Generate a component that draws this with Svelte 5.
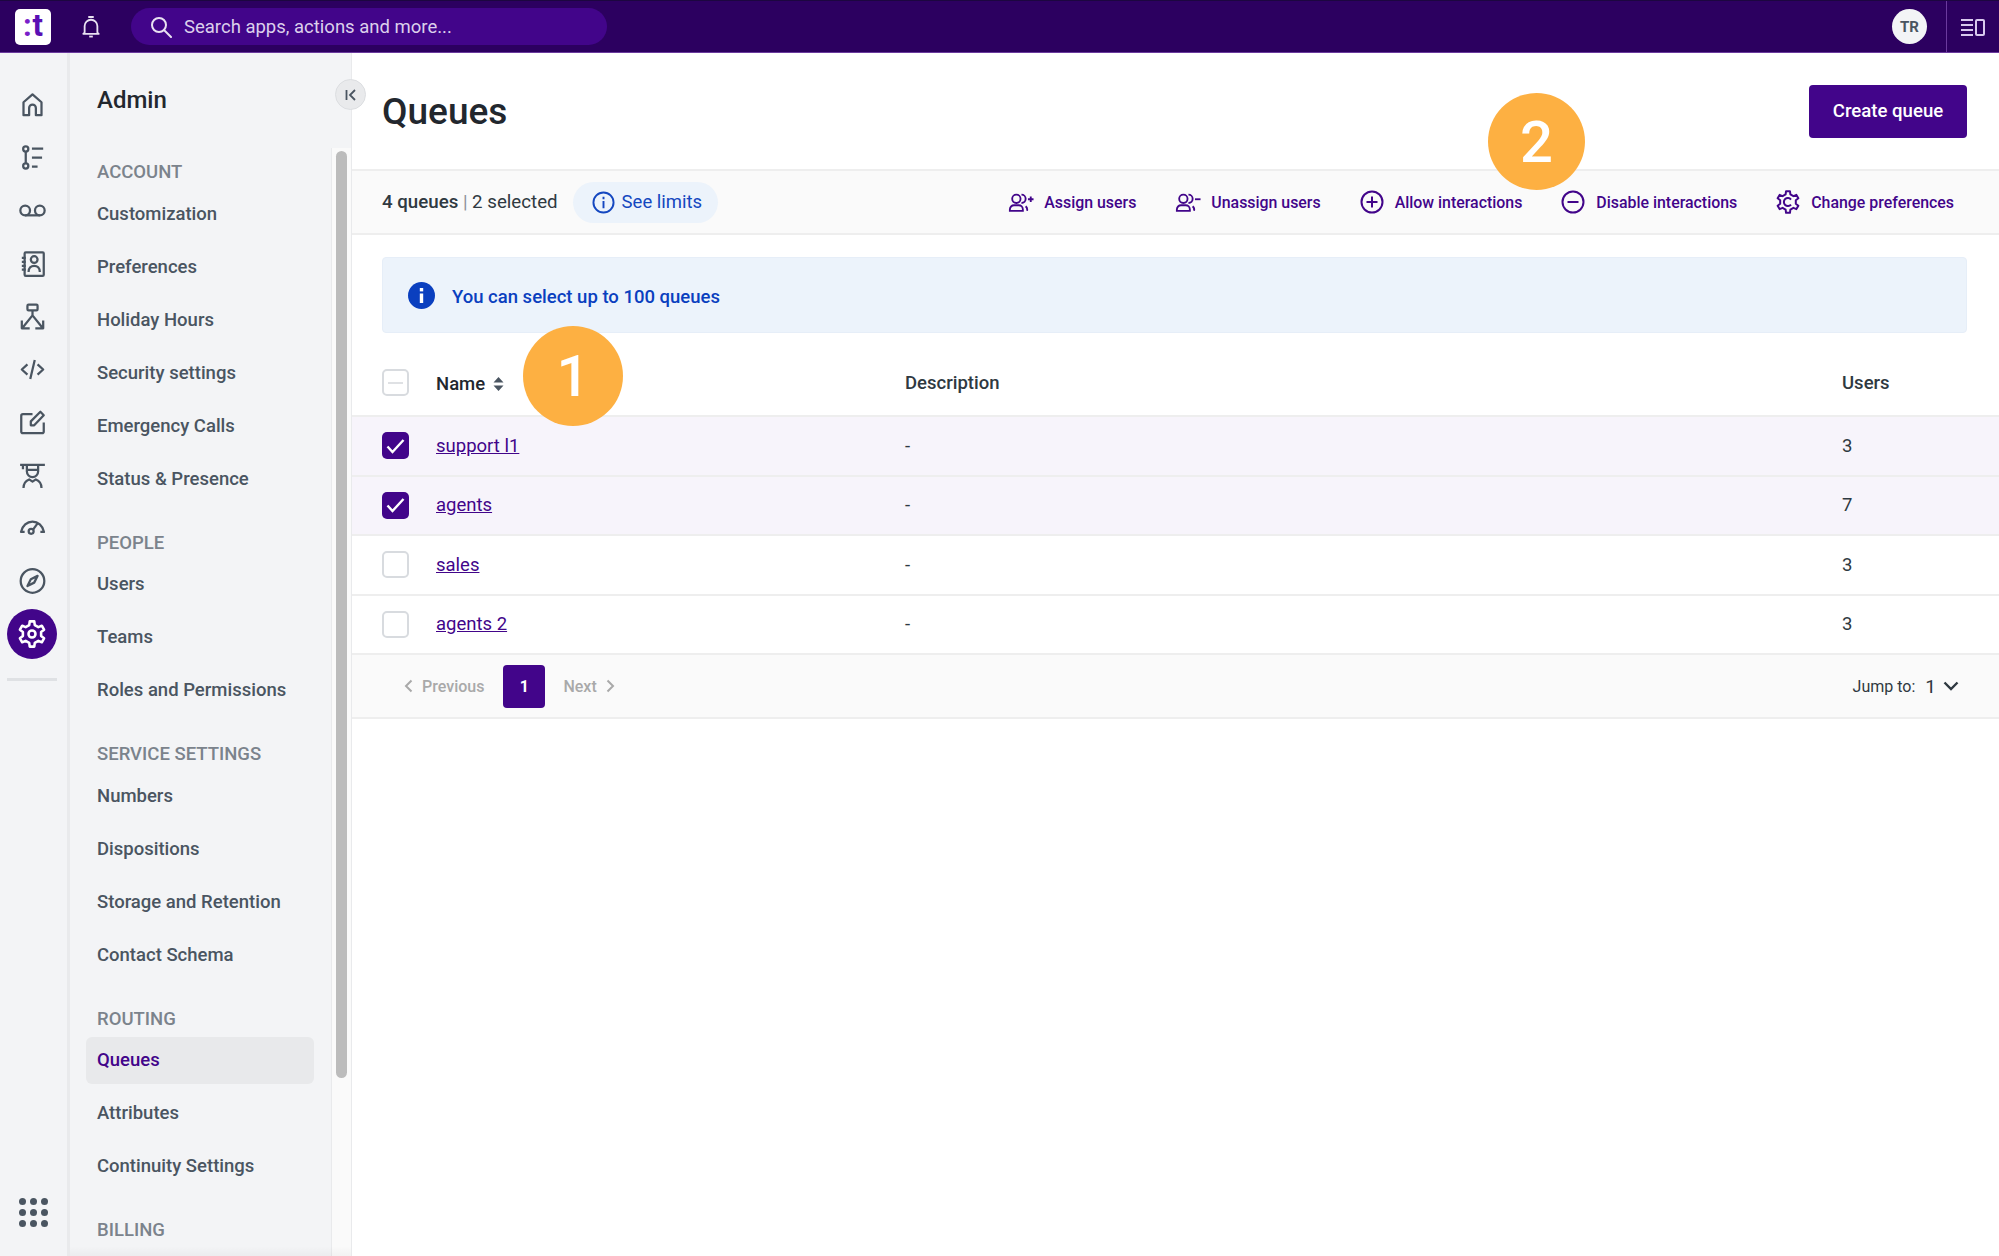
<script>
  const sections = [
    { title: 'ACCOUNT', items: ['Customization', 'Preferences', 'Holiday Hours', 'Security settings', 'Emergency Calls', 'Status & Presence'] },
    { title: 'PEOPLE', items: ['Users', 'Teams', 'Roles and Permissions'] },
    { title: 'SERVICE SETTINGS', items: ['Numbers', 'Dispositions', 'Storage and Retention', 'Contact Schema'] },
    { title: 'ROUTING', items: ['Queues', 'Attributes', 'Continuity Settings'] },
    { title: 'BILLING', items: [] }
  ];

  const queues = [
    { name: 'support l1', users: 3, checked: true },
    { name: 'agents', users: 7, checked: true },
    { name: 'sales', users: 3, checked: false },
    { name: 'agents 2', users: 3, checked: false }
  ];

  // six-toothed cog outline, used by the rail and the toolbar
  function gear(cx, cy, outer, inner, teeth = 6) {
    const pts = [];
    const step = (Math.PI * 2) / teeth;
    for (let i = 0; i < teeth; i++) {
      const a = i * step - Math.PI / 2;
      const w = step * 0.17;
      const at = (r, t) => `${(cx + r * Math.cos(t)).toFixed(2)} ${(cy + r * Math.sin(t)).toFixed(2)}`;
      pts.push(at(inner, a - w * 1.7), at(outer, a - w), at(outer, a + w), at(inner, a + w * 1.7));
    }
    return 'M' + pts.join('L') + 'Z';
  }

  const railIcons = [
    '<path d="M4 21.5V10l8-7 8 7v11.500h-5V15a3 3 0 0 0-6 0v6.500z"/>',
    '<circle cx="6" cy="4.500" r="2.300"/><circle cx="6" cy="19.500" r="2.300"/><path d="M6 7v10M11.500 4h10M11.500 12h9M11.500 20h5"/>',
    '<circle cx="5.500" cy="12" r="4.300"/><circle cx="18.500" cy="12" r="4.300"/><path d="M5.500 16.300h13"/>',
    '<rect x="5" y="2" width="17" height="21" rx="1"/><path d="M2.500 7h3.500M2.500 10.500h3.500M2.500 14h3.500M2.500 17.500h3.500"/><circle cx="13.500" cy="8.500" r="3"/><path d="M8.500 19.500c0-3.500 2.200-5.500 5-5.500s5 2 5 5.500"/>',
    '<rect x="7.500" y="1.500" width="9" height="5" rx="1"/><path d="M12 6.500V11L3.500 21.500M12 11l8.500 10.500M2.500 15.500v7h7M21.500 15.500v7h-7"/>',
    '<path d="M7.500 7.500 2.500 12l5 4.500M16.500 7.500l5 4.500-5 4.500M14 3.500 10 20.500"/>',
    '<path d="M12 4.500H3.500a1.500 1.500 0 0 0-1.500 1.500v14a1.500 1.500 0 0 0 1.500 1.500h17a1.500 1.500 0 0 0 1.500-1.500V12"/><path d="M10.500 14.500v-3.500l8.500-8.500 3 3-8.500 9z"/>',
    '<path d="M1 2.500h22M3.500 2.500v4M7 2.500v6a5 5 0 0 0 10 0v-6M7 7h10M4 23c0-4 2.500-6.500 5-7.500l3 2 3-2c2.500 1 5 3.500 5 7.500"/>',
    '<path d="M5 15H1.800A10.500 12 0 0 1 22.200 15H19"/><circle cx="10.800" cy="14.500" r="2.200"/><path d="m12.500 13 4-5.500"/>',
    '<circle cx="12" cy="11.500" r="10.500"/><path d="m16.500 7-3 6-6 3 3-6z"/>'
  ];

  const actions = [
    { label: 'Assign users', kind: 'add' },
    { label: 'Unassign users', kind: 'remove' },
    { label: 'Allow interactions', kind: 'plus' },
    { label: 'Disable interactions', kind: 'minus' },
    { label: 'Change preferences', kind: 'gear' }
  ];
</script>

<div class="page">
  <header class="topbar">
    <div class="logo"><span class="colon">:</span>t</div>
    <svg class="bell" width="20" height="26" viewBox="0 0 22 26" fill="none" stroke="#e9e2f2" stroke-width="2" stroke-linejoin="round">
      <path d="M8 2h6M4 19v-7a7 7 0 0 1 14 0v7l1.500 1.500h-17z"/><path d="M9 23.500h4"/>
    </svg>
    <div class="search">
      <svg width="22" height="22" viewBox="0 0 22 22" fill="none" stroke="#e9e2f2" stroke-width="2" stroke-linecap="round">
        <circle cx="9" cy="9" r="7"/><path d="m14 14 7 7"/>
      </svg>
      <span>Search apps, actions and more...</span>
    </div>
    <div class="avatar">TR</div>
    <div class="panel-toggle">
      <svg width="24" height="20" viewBox="0 0 24 20" fill="none" stroke="#d9c9ee" stroke-width="2">
        <path d="M0 3h12M0 8h12M0 13h12M0 18h12"/><rect x="15" y="3" width="8" height="15" rx="1"/>
      </svg>
    </div>
  </header>

  <div class="body">
    <nav class="rail">
      {#each railIcons as icon}
        <svg class="rail-icon" width="27" height="27" viewBox="0 0 24 24" fill="none" stroke="#4a5561" stroke-width="2" stroke-linejoin="round">
          {@html icon}
        </svg>
      {/each}
      <div class="rail-active">
        <svg width="28" height="28" viewBox="0 0 24 24" fill="none" stroke="#fff" stroke-width="2.200" stroke-linejoin="round">
          <path d={gear(12, 12, 11, 8)} /><circle cx="12" cy="12" r="3" />
        </svg>
      </div>
      <div class="rail-rule"></div>
      <div class="apps">
        {#each Array(9) as _}<i></i>{/each}
      </div>
    </nav>

    <aside class="sidebar">
      <h2>Admin</h2>
      <div class="side-scroll">
        <div class="side-nav">
          {#each sections as section}
            <section>
              <h3>{section.title}</h3>
              {#each section.items as item}
                <div class="side-item" class:current={item === 'Queues'}>{item}</div>
              {/each}
            </section>
          {/each}
        </div>
        <div class="track"><div class="thumb"></div></div>
      </div>
      <button class="collapse" aria-label="Collapse">
        <svg width="14" height="14" viewBox="0 0 14 14" fill="none" stroke="#4a5561" stroke-width="1.800">
          <path d="M2.500 2v10M11 2 6 7l5 5"/>
        </svg>
      </button>
    </aside>

    <main class="main">
      <div class="head">
        <h1>Queues</h1>
        <button class="primary">Create queue</button>
      </div>

      <div class="toolbar">
        <span class="count"><b>4 queues</b> <em>|</em> 2 selected</span>
        <span class="limits">
          <svg width="23" height="23" viewBox="0 0 24 24" fill="none" stroke="#1447c0" stroke-width="2">
            <circle cx="12" cy="12" r="10.500"/><path d="M12 10.500V18M12 6v2.500"/>
          </svg>
          See limits
        </span>
        <div class="actions">
          {#each actions as a}
            <span class="action">
              {#if a.kind === 'add' || a.kind === 'remove'}
                <svg class="person" width="26" height="19" viewBox="0 0 28 20" fill="none" stroke="#42058a" stroke-width="2">
                  <circle cx="9" cy="6" r="4.500"/><path d="M2 19v-1.500A4.500 4.500 0 0 1 6.500 13h5a4.500 4.500 0 0 1 4.500 4.500V19zM14.500 1.500a4.500 4.500 0 0 1 0 9M19 14a5 5 0 0 1 1.500 5"/>
                  {#if a.kind === 'add'}<path d="M24.500 3.500v6M21.500 6.500h6"/>{:else}<path d="M21.500 6.500h6"/>{/if}
                </svg>
              {:else if a.kind === 'gear'}
                <svg width="24" height="24" viewBox="0 0 24 24" fill="none" stroke="#42058a" stroke-width="2" stroke-linejoin="round">
                  <path d={gear(12, 12, 11, 8)} /><path d="M15 9.500a4 4 0 1 0 0 5"/>
                </svg>
              {:else}
                <svg width="24" height="24" viewBox="0 0 24 24" fill="none" stroke="#42058a" stroke-width="2">
                  <circle cx="12" cy="12" r="10.500"/>
                  <path d="M6.500 12h11"/>
                  {#if a.kind === 'plus'}<path d="M12 6.500v11"/>{/if}
                </svg>
              {/if}
              {a.label}
            </span>
          {/each}
        </div>
      </div>

      <div class="alert">
        <svg width="27" height="27" viewBox="0 0 27 27">
          <circle cx="13.500" cy="13.500" r="13.500" fill="#0a3fbf"/>
          <rect x="11.800" y="11.500" width="3.400" height="9.500" fill="#fff"/><rect x="11.800" y="6" width="3.400" height="3.400" fill="#fff"/>
        </svg>
        <span>You can select up to 100 queues</span>
      </div>

      <div class="row header">
        <span class="box minus"><i></i></span>
        <span class="name-head">Name
          <svg width="11" height="14" viewBox="0 0 11 14" fill="#4a5561"><path d="M5.500 0 10.500 5.500H.5zM5.500 14 .5 8.500h10z"/></svg>
        </span>
        <span>Description</span>
        <span>Users</span>
      </div>

      {#each queues as q}
        <div class="row item" class:selected={q.checked}>
          {#if q.checked}
            <span class="box on">
              <svg width="19" height="16" viewBox="0 0 19 16" fill="none" stroke="#fff" stroke-width="2.400"><path d="m1.500 8.500 5 5.500L17.500 2"/></svg>
            </span>
          {:else}
            <span class="box"></span>
          {/if}
          <a href="#q">{q.name}</a>
          <span>-</span>
          <span>{q.users}</span>
        </div>
      {/each}

      <div class="pager">
        <span class="nav-link">
          <svg width="9" height="14" viewBox="0 0 9 14" fill="none" stroke="#a9a9a9" stroke-width="2"><path d="M7.500 1.500 2 7l5.500 5.500"/></svg>
          Previous
        </span>
        <span class="page-no">1</span>
        <span class="nav-link">
          Next
          <svg width="9" height="14" viewBox="0 0 9 14" fill="none" stroke="#a9a9a9" stroke-width="2"><path d="M1.500 1.500 7 7l-5.500 5.500"/></svg>
        </span>
        <span class="jump">Jump to: <b>1</b>
          <svg width="16" height="10" viewBox="0 0 16 10" fill="none" stroke="#2f3941" stroke-width="2.400"><path d="m1.500 1.500 6.500 6.500 6.500-6.500"/></svg>
        </span>
      </div>
    </main>
  </div>

  <div class="mark mark-one">1</div>
  <div class="mark mark-two">2</div>
</div>

<style>
  :global(body) {
    margin: 0;
    overflow: hidden;
  }

  .page {
    position: relative;
    width: 1999px;
    height: 1256px;
    overflow: hidden;
    display: flex;
    flex-direction: column;
    font-family: Roboto, "Liberation Sans", sans-serif;
    font-size: 18.500px;
    color: #2f3941;
    background: #fff;
  }

  .topbar {
    height: 53px;
    box-sizing: border-box;
    flex: none;
    display: flex;
    align-items: center;
    background: #2c0060;
    border-top: 1px solid #1c0640;
    border-bottom: 1px solid #6b3a9e;
    padding-left: 15px;
  }

  .logo {
    width: 36px;
    height: 36px;
    border-radius: 5px;
    background: #fff;
    color: #5a0fb4;
    font-size: 31px;
    font-weight: 700;
    line-height: 34px;
    text-align: center;
  }

  .colon {
    color: #7a1fc9;
    margin-right: 1px;
  }

  .bell {
    margin-left: 30px;
  }

  .search {
    margin-left: 30px;
    width: 476px;
    height: 37px;
    box-sizing: border-box;
    border-radius: 19px;
    background: #42058a;
    display: flex;
    align-items: center;
    gap: 12px;
    padding-left: 19px;
    color: #dcd0ec;
    font-size: 18.500px;
  }

  .avatar {
    margin-left: auto;
    width: 35px;
    height: 35px;
    border-radius: 50%;
    background: #f3f4f6;
    color: #4a5561;
    font-size: 15px;
    font-weight: 700;
    display: flex;
    align-items: center;
    justify-content: center;
  }

  .panel-toggle {
    margin-left: 19px;
    width: 53px;
    height: 100%;
    box-sizing: border-box;
    border-left: 1px solid #6b3a9e;
    display: flex;
    align-items: center;
    justify-content: center;
  }

  .body {
    flex: 1;
    display: flex;
    min-height: 0;
  }

  .rail {
    width: 70px;
    flex: none;
    box-sizing: border-box;
    background: #f3f4f6;
    border-right: 3px solid #e9eaec;
    display: flex;
    flex-direction: column;
    align-items: center;
    padding: 38px 3px 0 0;
    position: relative;
  }

  .rail-icon {
    flex: none;
    margin-bottom: 26px;
  }

  .rail-active {
    width: 50px;
    height: 50px;
    border-radius: 50%;
    background: #42058a;
    display: flex;
    align-items: center;
    justify-content: center;
    margin-top: -12px;
  }

  .rail-rule {
    width: 50px;
    height: 3px;
    background: #dfe1e4;
    margin-top: 19px;
  }

  .apps {
    margin-top: auto;
    margin-bottom: 29px;
    display: grid;
    grid-template-columns: repeat(3, 7px);
    gap: 4px;
    margin-left: 3px;
  }

  .apps i {
    width: 7px;
    height: 7px;
    border-radius: 50%;
    background: #4a5561;
  }

  .sidebar {
    position: relative;
    width: 282px;
    flex: none;
    box-sizing: border-box;
    background: #f3f4f6;
    border-right: 1px solid #e9eaec;
    display: flex;
    flex-direction: column;
  }

  .sidebar::after {
    content: "";
    position: absolute;
    left: 0;
    right: 0;
    bottom: 0;
    height: 10px;
    background: linear-gradient(rgba(0, 0, 0, 0), rgba(0, 0, 0, 0.03));
  }

  .sidebar h2 {
    margin: 0;
    height: 95px;
    box-sizing: border-box;
    padding: 32px 0 0 27px;
    font-size: 24px;
    line-height: 30px;
    font-weight: 500;
    color: #22272e;
  }

  .side-scroll {
    flex: 1;
    min-height: 0;
    display: flex;
  }

  .side-nav {
    width: 262px;
    box-sizing: border-box;
    padding: 9px 17px 0 16px;
    overflow: hidden;
    border-right: 1px solid #e9eaec;
  }

  .side-nav section + section {
    margin-top: 25px;
  }

  .side-nav h3 {
    margin: 0 0 3.500px;
    padding-left: 11px;
    height: 30px;
    line-height: 30px;
    font-size: 18.500px;
    font-weight: 500;
    color: #7b838c;
  }

  .side-item {
    height: 47px;
    line-height: 47px;
    padding-left: 11px;
    margin-bottom: 6px;
    border-radius: 6px;
    font-weight: 500;
    color: #4a5561;
  }

  .side-item.current {
    background: #e8e9eb;
    color: #42058a;
  }

  .track {
    flex: 1;
    background: #fafafa;
    padding-left: 4px;
    padding-top: 3px;
  }

  .thumb {
    width: 11px;
    height: 927px;
    border-radius: 6px;
    background: #bcbcbc;
  }

  .collapse {
    position: absolute;
    top: 26px;
    right: -15px;
    width: 31px;
    height: 31px;
    padding: 0;
    border-radius: 50%;
    border: 1px solid #dcdee1;
    background: #e9eaec;
    display: flex;
    align-items: center;
    justify-content: center;
  }

  .main {
    flex: 1;
    min-width: 0;
  }

  .head {
    height: 116px;
    box-sizing: border-box;
    display: flex;
    align-items: center;
    justify-content: space-between;
    padding: 0 32px 0 30px;
  }

  h1 {
    margin: 0;
    font-size: 37px;
    font-weight: 500;
    color: #22272e;
  }

  .primary {
    width: 158px;
    height: 53px;
    border: 0;
    border-radius: 4px;
    background: #42058a;
    color: #fff;
    font: 500 18.600px Roboto, sans-serif;
  }

  .toolbar {
    height: 66px;
    box-sizing: border-box;
    border-top: 2px solid #eeeeee;
    border-bottom: 2px solid #eeeeee;
    background: #fafafa;
    display: flex;
    align-items: center;
    padding: 0 45px 0 30px;
  }

  .count {
    font-size: 18.700px;
  }

  .count b {
    font-weight: 500;
  }

  .count em {
    font-style: normal;
    color: #8a9099;
  }

  .limits {
    margin-left: 15px;
    height: 41px;
    box-sizing: border-box;
    padding: 0 16px 0 19px;
    border-radius: 21px;
    background: #ecf3fb;
    color: #1447c0;
    display: inline-flex;
    align-items: center;
    gap: 7px;
  }

  .actions {
    margin-left: auto;
    display: flex;
    gap: 39px;
  }

  .action {
    display: inline-flex;
    align-items: center;
    gap: 11px;
    font-size: 15.900px;
    font-weight: 500;
    color: #42058a;
  }

  .person {
    margin-right: -1px;
  }

  .alert {
    margin: 22px 32px 17px 30px;
    height: 76px;
    box-sizing: border-box;
    border-radius: 4px;
    border: 1px solid #e6eef8;
    background: #ecf3fb;
    padding-left: 25px;
    display: flex;
    align-items: center;
    gap: 17px;
    font-weight: 500;
    color: #0a3fbf;
  }

  .alert span {
    padding-top: 4px;
  }

  .row {
    display: grid;
    grid-template-columns: 54px 469px 937px 1fr;
    align-items: center;
    padding-left: 30px;
    box-sizing: border-box;
    border-bottom: 2px solid #eeeeee;
  }

  .row.header {
    height: 67px;
    font-weight: 500;
    color: #2f3941;
  }

  .name-head {
    display: inline-flex;
    align-items: center;
    gap: 8px;
    padding-top: 2px;
    color: #22272e;
  }

  .row.item {
    height: 59.500px;
  }

  .row.item.selected {
    background: #f7f4fb;
  }

  .row a {
    color: #42058a;
    justify-self: start;
  }

  .box {
    width: 27px;
    height: 27px;
    box-sizing: border-box;
    border-radius: 5px;
    border: 2px solid #d8dbdf;
    background: #fff;
    display: flex;
    align-items: center;
    justify-content: center;
  }

  .box.on {
    border: 0;
    background: #42058a;
  }

  .box.minus i {
    width: 15px;
    height: 2px;
    background: #dfe1e4;
  }

  .pager {
    height: 64px;
    box-sizing: border-box;
    border-bottom: 2px solid #eeeeee;
    background: #fafafa;
    display: flex;
    align-items: center;
    padding: 0 40px 0 52px;
    font-size: 16px;
  }

  .nav-link {
    display: inline-flex;
    align-items: center;
    gap: 9px;
    font-weight: 500;
    color: #a9a9a9;
  }

  .page-no {
    width: 42px;
    height: 43px;
    margin: 0 18px 0 19px;
    border-radius: 4px;
    background: #42058a;
    color: #fff;
    font-weight: 700;
    display: flex;
    align-items: center;
    justify-content: center;
  }

  .jump {
    margin-left: auto;
    display: inline-flex;
    align-items: center;
    color: #2f3941;
  }

  .jump b {
    font-weight: 400;
    font-size: 19px;
    margin: 0 7px 0 10px;
  }

  .mark {
    position: absolute;
    border-radius: 50%;
    background: #fdb042;
    color: #fff;
    font-size: 58px;
    font-weight: 500;
    display: flex;
    align-items: center;
    justify-content: center;
  }

  .mark-one {
    left: 523px;
    top: 326px;
    width: 100px;
    height: 100px;
  }

  .mark-two {
    left: 1488px;
    top: 93px;
    width: 97px;
    height: 97px;
  }
</style>
